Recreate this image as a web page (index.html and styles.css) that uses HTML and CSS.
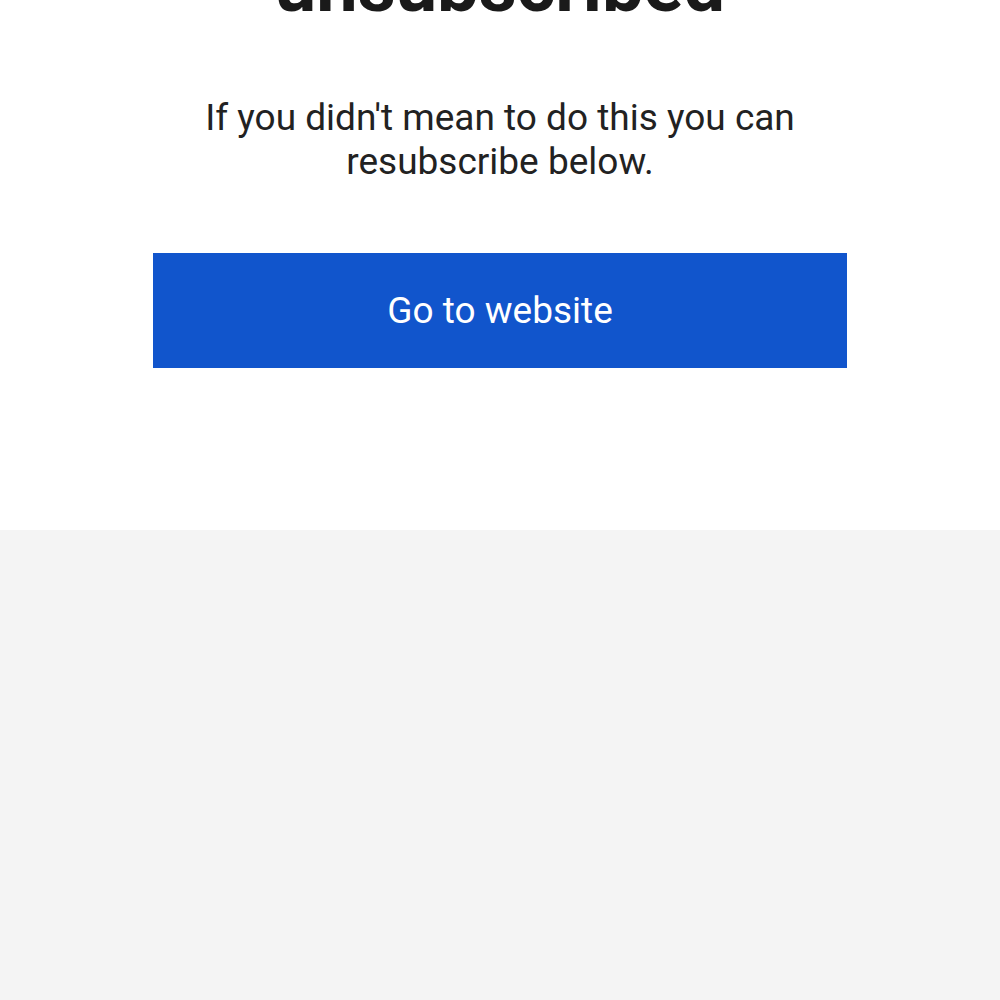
FILE: index.html
```html
<!DOCTYPE html>
<html lang="en">
<head>
  <meta charset="UTF-8" />
  <meta name="viewport" content="width=device-width, initial-scale=1.0"/>
  <title>Unsubscribed</title>
  <link rel="stylesheet" href="styles.css">
</head>
<body>

<main class="panel">
  <h1 class="title">You've been unsubscribed</h1>
  <p class="message">If you didn't mean to do this you can resubscribe below.</p>
  <a class="cta" href="#">Go to website</a>
</main>

<footer class="footer"></footer>

</body>
</html>
```

FILE: styles.css
```css
* {
  box-sizing: border-box;
}

body {
  margin: 0;
  font-family: Roboto, 'Noto Sans', sans-serif;
  color: #222222;
  background: #f4f4f4;
  min-height: 100vh;
  display: flex;
  flex-direction: column;
}

.panel {
  background: #ffffff;
  height: 530px;
  display: flex;
  flex-direction: column;
  align-items: center;
  overflow: hidden;
}

.title {
  width: 694px;
  margin: -146px 0 0;
  font-size: 74px;
  line-height: 88px;
  font-weight: 700;
  text-align: center;
  color: #1a1a1a;
}

.message {
  width: 694px;
  margin: 66px 0 0;
  font-size: 37px;
  line-height: 44px;
  text-align: center;
}

.cta {
  display: flex;
  align-items: center;
  justify-content: center;
  width: 694px;
  height: 115px;
  margin-top: 69px;
  background: #1155cc;
  color: #ffffff;
  font-size: 37px;
  text-decoration: none;
}

.footer {
  flex: 1;
  background: #f4f4f4;
}
```
